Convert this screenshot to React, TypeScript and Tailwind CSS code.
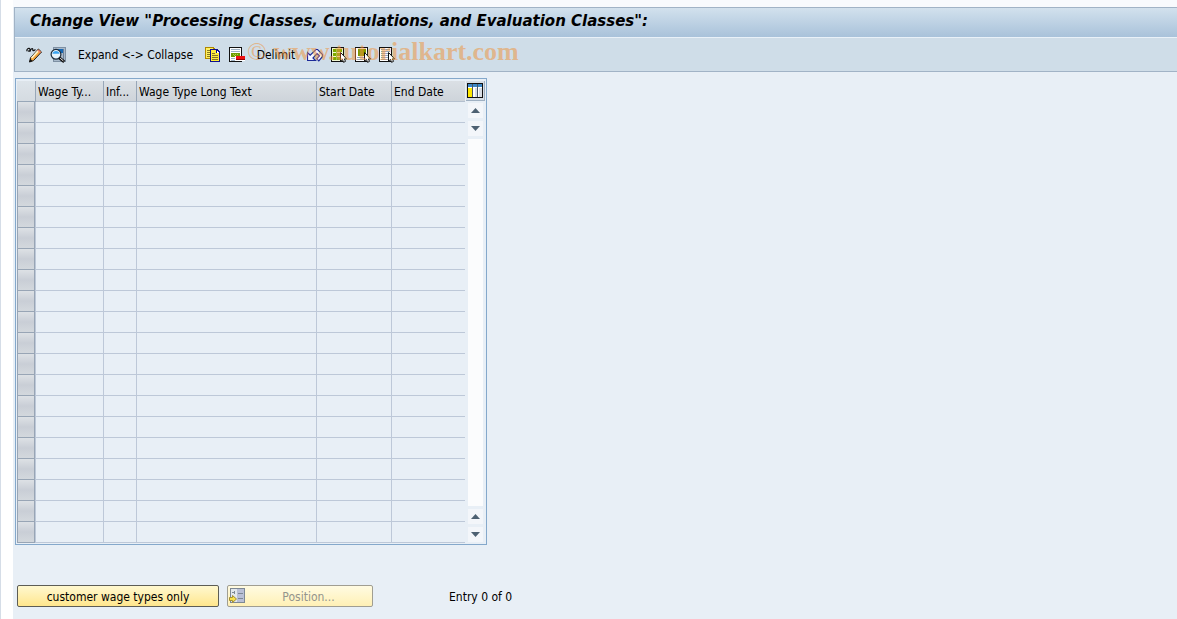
import { useState, type ReactNode } from "react";
import clsx from "clsx";

const columns = [
  { key: "wageType", label: "Wage Ty..." },
  { key: "infinite", label: "Inf..." },
  { key: "longText", label: "Wage Type Long Text" },
  { key: "start", label: "Start Date" },
  { key: "end", label: "End Date" },
];

const rows = Array.from({ length: 21 }, (_, i) => i);

function Icon({ children }: { children: ReactNode }) {
  return (
    <svg width="16" height="16" viewBox="0 0 16 16" shapeRendering="crispEdges" aria-hidden="true" className="block shrink-0">
      {children}
    </svg>
  );
}

function PencilIcon() {
  return (
    <Icon>
      <g shapeRendering="auto" fill="none">
        <path d="M.8 4.2C.6 1.6 3.4.4 4 2.3c.4 1.4-1.2 2.4-2 1.4M4 4.6C4.6 1.4 7 .8 6.8 2.8c-.2 1.4 1.6 1 2.6-.4" stroke="#111" strokeWidth="1.2" />
        <path d="M3.5 15l1-4.2L12.4 2l3.1 3-8 8.6z" fill="#f5a63c" stroke="#1a1a1a" />
        <path d="M5.6 11L12.2 3.8" stroke="#fff3c8" strokeWidth="1.8" />
        <path d="M11.4 3.4l1.1-1 2.6 2.5-1.1 1.2z" fill="#f0806a" />
        <path d="M3.3 15.3l1-3.6 2.2 2.2z" fill="#111" />
      </g>
    </Icon>
  );
}

function DisplayIcon() {
  return (
    <Icon>
      <path d="M3 0h13v15H3z" fill="#7e90a3" />
      <path d="M4 1h11v13H4z" fill="#a9bacb" />
      <path d="M5 2h8v4H5z" fill="#1668b4" />
      <path d="M13 2h1v11h-1z" fill="#6d8197" />
      <g shapeRendering="auto">
        <circle cx="6" cy="7.3" r="4.9" fill="#e6f3fc" stroke="#1b2a3a" strokeWidth="1.2" />
        <path d="M2.4 6.8a3.7 3.7 0 0 1 7.2 0z" fill="#3ba4f0" />
        <path d="M9.4 10.8l4.8 4" stroke="#111" strokeWidth="3" />
        <path d="M10.2 11.2l3.2 2.7" stroke="#f4f4f4" />
      </g>
    </Icon>
  );
}

function CopyIcon() {
  return (
    <Icon>
      <path d="M0 0h8l2 2v10H0z" fill="#b08800" />
      <path d="M1 1h7v10H1z" fill="#ffef60" />
      <path d="M2 3h3v1H2zM2 5h3v1H2zM2 7h3v1H2zM2 9h3v1H2z" fill="#8a7a20" />
      <path d="M5 2h7l3 3v10H5z" fill="#10108a" />
      <path d="M6 3h5v3h3v8H6z" fill="#ffee3c" />
      <path d="M12 4h1v1h1v1h-2z" fill="#fff" />
      <path d="M7 6h3v1H7zM7 8h6v1H7zM7 10h6v1H7zM7 12h6v1H7z" fill="#84742a" />
    </Icon>
  );
}

function DeleteRowIcon() {
  return (
    <Icon>
      <path d="M0 0h13v15H0z" fill="#111" />
      <path d="M1 1h11v13H1z" fill="#fff" />
      <path d="M2 2h9v1H2zM2 4h9v1H2zM2 11h5v1H2zM2 13h9v1H2z" fill="#9fb2c4" />
      <path d="M2 6h9v4H2z" fill="#6c9a00" />
      <path d="M4 7h1v1H4zM6 7h1v1H6zM5 8h1v1H5zM8 7h1v1H8z" fill="#b4d040" />
      <path d="M6 9h10v5H6z" fill="#fff" />
      <path d="M7 9h9v4H7z" fill="#ee1010" />
      <path d="M7 12h9v1H7z" fill="#900" />
    </Icon>
  );
}

function UndoIcon() {
  return (
    <Icon>
      <g shapeRendering="auto">
        <path d="M.5 5.5v8h8L6 11l4-4.3 2.4 2.2-2.6 2.9 2 2 3.8-4.3v-1.8L10.6 2.5H9L3.2 8.2z" fill="#f4f6ff" stroke="#1c2a98" strokeWidth="1.2" />
      </g>
    </Icon>
  );
}

function Pointer() {
  return (
    <g shapeRendering="auto">
      <path d="M9.5 5.5v8.6l2-1.6 1 2.8 2-.9-1.1-2.5h2.3z" fill="#fff" stroke="#111" />
    </g>
  );
}

function SelectAllIcon() {
  return (
    <Icon>
      <path d="M0 0h13v15H0z" fill="#111" />
      <path d="M1 1h11v13H1z" fill="#f0f6d0" />
      <path d="M2 2h9v3H2zM2 6h9v3H2zM2 10h9v3H2z" fill="#7da800" />
      <path d="M5 2h1v11H5z" fill="#a8c840" />
      <Pointer />
    </Icon>
  );
}

function SelectBlockIcon() {
  return (
    <Icon>
      <path d="M0 0h13v15H0z" fill="#111" />
      <path d="M1 1h11v13H1z" fill="#fff" />
      <path d="M3 2h8v7H3z" fill="#7d9800" />
      <path d="M2 10h9v1H2zM2 12h9v1H2z" fill="#8fa6bd" />
      <Pointer />
    </Icon>
  );
}

function DeselectIcon() {
  return (
    <Icon>
      <path d="M0 0h13v15H0z" fill="#111" />
      <path d="M1 1h11v13H1z" fill="#fff" />
      <path d="M2 2h9v1H2zM2 4h9v1H2zM2 6h9v1H2zM2 8h9v1H2zM2 10h9v1H2zM2 12h9v1H2z" fill="#8fa6bd" />
      <Pointer />
    </Icon>
  );
}

function TableSettingsIcon() {
  return (
    <Icon>
      <path d="M0 0h16v15H0z" fill="#111" />
      <path d="M1 1h14v13H1z" fill="#fff" />
      <path d="M1 1h14v3H1z" fill="#3c88c8" />
      <path d="M1 5h4v9H1z" fill="#ffe800" />
      <path d="M8 5h2v9H8zM12 5h3v9h-3z" fill="#d8dde4" />
      <path d="M5 1h1v13H5zM10 1h1v13h-1z" fill="#4a5668" />
    </Icon>
  );
}

function PositionIcon() {
  return (
    <Icon>
      <path d="M1 0h15v15H1z" fill="#7d8894" />
      <path d="M2 1h13v13H2z" fill="#e2e7ec" />
      <path d="M8 1h7v13H8z" fill="#b9bfd6" />
      <path d="M9 5h5v1H9zM9 10h5v1H9zM3 4h3v1H3zM5 3h1v3H5z" fill="#7d8894" />
      <g shapeRendering="auto">
        <path d="M.5 9.5h3v-2l4 3.5-4 3.5v-2h-3z" fill="#f7e04a" stroke="#a59030" />
      </g>
    </Icon>
  );
}

function ToolButton({ label, children }: { label: string; children: ReactNode }) {
  return (
    <button type="button" aria-label={label} title={label} className="flex h-6 w-6 items-center justify-center">
      {children}
    </button>
  );
}

function ScrollButton({ dir, label }: { dir: "up" | "down"; label: string }) {
  return (
    <button type="button" aria-label={label} className="flex h-[15px] w-[15px] items-center justify-center bg-[#f3f6fa]">
      <svg width="9" height="5" viewBox="0 0 9 5" aria-hidden="true">
        <path d={dir === "up" ? "M0 5L4.5 0 9 5z" : "M0 0h9L4.5 5z"} fill="#4d6172" />
      </svg>
    </button>
  );
}

export default function App() {
  const [selected, setSelected] = useState<number | null>(null);

  return (
    <div className="flex min-h-screen border-l border-[#d5dde7] bg-white pl-3 font-['DejaVu_Sans_Condensed','DejaVu_Sans',sans-serif] text-xs text-black">
      <main className="min-w-0 flex-1 bg-[#e8eff6]">
        <div className="h-[7px] bg-[#f8fafd]" />

        <header className="relative ml-px border-y border-l border-[#a1b3c6]">
          <h1 className="flex h-[30px] items-center border-b border-[#e9f1f8] bg-linear-to-b from-[#d2e1ed] to-[#a9c2da] pb-0.5 pl-[15px] font-['DejaVu_Sans',sans-serif] text-[15px] font-bold italic whitespace-nowrap">
            Change View "Processing Classes, Cumulations, and Evaluation Classes":
          </h1>
          <div role="toolbar" aria-label="Table actions" className="flex h-[33px] items-center bg-[#cfdde8] pl-[7px]">
            <ToolButton label="Change"><PencilIcon /></ToolButton>
            <ToolButton label="Display"><DisplayIcon /></ToolButton>
            <button type="button" className="h-6 w-[131px] whitespace-nowrap">Expand &lt;-&gt; Collapse</button>
            <ToolButton label="Copy as"><CopyIcon /></ToolButton>
            <ToolButton label="Delete"><DeleteRowIcon /></ToolButton>
            <button type="button" className="h-6 w-[54px]">Delimit</button>
            <ToolButton label="Undo"><UndoIcon /></ToolButton>
            <ToolButton label="Select all"><SelectAllIcon /></ToolButton>
            <ToolButton label="Select block"><SelectBlockIcon /></ToolButton>
            <ToolButton label="Deselect all"><DeselectIcon /></ToolButton>
          </div>
          <div className="pointer-events-none absolute top-[29px] left-[232px] font-['Liberation_Serif',serif] text-[26px] leading-[30px] whitespace-nowrap text-[#ee9540]/55">
            © <b>www.tutorialkart.com</b>
          </div>
        </header>

        <section className="mt-1.5 ml-0.5 flex w-fit border border-[#84a8cb] p-px pt-0.5">
          <table className="w-[448px] table-fixed border-separate border-spacing-0">
            <colgroup>
              <col className="w-[19px]" />
              <col className="w-[68px]" />
              <col className="w-[33px]" />
              <col className="w-[180px]" />
              <col className="w-[75px]" />
              <col className="w-[73px]" />
            </colgroup>
            <thead>
              <tr className="h-[21px]">
                <th aria-label="Row selection" className="border-r border-b border-[#98a7b8] bg-linear-to-b from-[#dde4ea] to-[#d5dbe1] p-0" />
                {columns.map((c) => (
                  <th key={c.key} scope="col" className="h-[21px] overflow-hidden border-r border-b border-r-[#98a7b8] border-b-[#b4c0cf] bg-linear-to-b from-[#dbe0e5] to-[#ced4da] p-0 pt-0.5 pl-0.5 text-left font-normal whitespace-nowrap last:border-r-0">
                    {c.label}
                  </th>
                ))}
              </tr>
            </thead>
            <tbody>
              {rows.map((r) => (
                <tr key={r} className={clsx(selected === r && "bg-[#ffe9a0]")}>
                  <th scope="row" className="h-[21px] border-r border-[#bdc8d8] p-0">
                    <button
                      type="button"
                      aria-label={`Select row ${r + 1}`}
                      onClick={() => setSelected(selected === r ? null : r)}
                      className="block h-[21px] w-full border-x border-b border-[#98a5b5] bg-linear-to-b from-[#dde1e5] via-[#c9ced6] to-[#d3d8dd]"
                    />
                  </th>
                  {columns.map((c) => (
                    <td key={c.key} className="h-[21px] border-r border-b border-[#bdc8d8] p-0 last:border-r-0" />
                  ))}
                </tr>
              ))}
            </tbody>
          </table>

          <div className="ml-px flex w-[19px] flex-col items-center">
            <button type="button" aria-label="Table settings" className="flex h-5 w-[19px] items-center justify-center border-r border-b border-[#9fb0c2] bg-[#d6dde5]">
              <TableSettingsIcon />
            </button>
            <div className="mt-0.5 flex flex-1 flex-col gap-[3px] pb-px">
              <ScrollButton dir="up" label="Scroll up" />
              <ScrollButton dir="down" label="Scroll down" />
              <div className="flex-1 bg-[#fbfcfd]" />
              <ScrollButton dir="up" label="Previous row" />
              <ScrollButton dir="down" label="Next row" />
            </div>
          </div>
        </section>

        <footer className="mt-10 ml-1 flex items-center">
          <button type="button" className="h-[22px] w-[202px] rounded-xs border border-[#5d5d55] bg-linear-to-b from-[#fff8cf] to-[#ffe68c] pt-0.5">
            customer wage types only
          </button>
          <button type="button" disabled className="ml-2 flex h-[22px] w-[146px] items-center rounded-xs border border-[#a09e92] bg-linear-to-b from-[#fffbe2] to-[#fff0b5] pl-px text-[#94948c]">
            <PositionIcon />
            <span className="flex-1 pt-0.5 text-center">Position...</span>
          </button>
          <span className="ml-[76px] pt-0.5">Entry 0 of 0</span>
        </footer>
      </main>
    </div>
  );
}
